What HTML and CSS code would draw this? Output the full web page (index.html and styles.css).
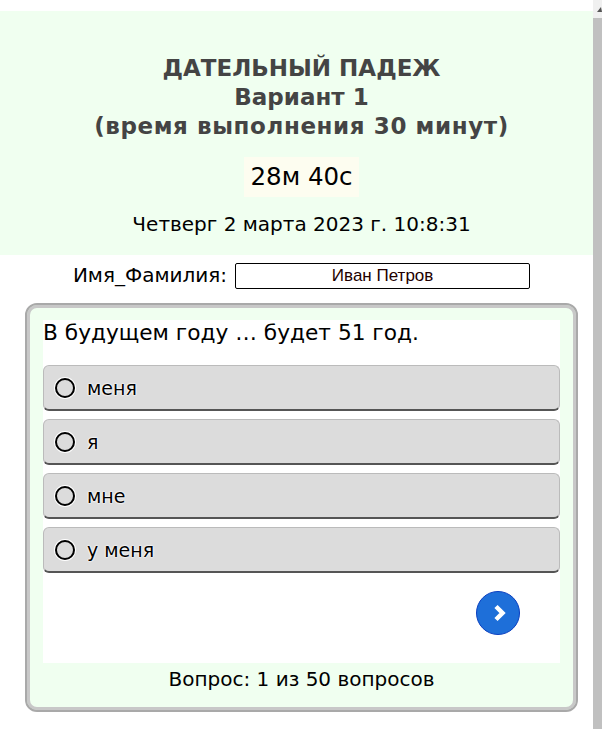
FILE: index.html
```html
<!DOCTYPE html>
<html>
<head>
    <meta charset="utf-8">
    <link rel="stylesheet" href="styles.css">
</head>
<body>
    <div class="page">
        <header class="head">
            <h1 class="title">ДАТЕЛЬНЫЙ ПАДЕЖ<br>Вариант 1<br><span class="title-note">(время выполнения 30 минут)</span></h1>
            <div class="timer">28м 40с</div>
            <p class="date">Четверг 2 марта 2023 г. 10:8:31</p>
        </header>
        <div class="name-row">
            <label class="name-label" for="name">Имя_Фамилия:</label>
            <input class="name-input" id="name" type="text" value="Иван Петров">
        </div>
        <section class="quiz">
            <div class="question-box">
                <p class="question">В будущем году … будет 51 год.</p>
                <div class="answer"><span class="radio"></span><span class="answer-text">меня</span></div>
                <div class="answer"><span class="radio"></span><span class="answer-text">я</span></div>
                <div class="answer"><span class="radio"></span><span class="answer-text">мне</span></div>
                <div class="answer"><span class="radio"></span><span class="answer-text">у меня</span></div>
                <div class="actions">
                    <button class="next" type="button">
                        <svg width="20" height="20" viewBox="0 0 20 20"><path d="M8 3.5 L14.5 10 L8 16.5" fill="none" stroke="#fff" stroke-width="4.5"/></svg>
                    </button>
                </div>
            </div>
            <p class="counter">Вопрос: 1 из 50 вопросов</p>
        </section>
    </div>
    <div class="scrollbar">
        <div class="arrow-btn"><span class="arrow-up"></span></div>
        <div class="track"></div>
    </div>
</body>
</html>
```

FILE: styles.css
```css
html, body {
    margin: 0;
    padding: 0;
    height: 100%;
    overflow: hidden;
}

body {
    display: flex;
    background-color: #fff;
    font-family: "DejaVu Sans", sans-serif;
    color: #000;
}

.page {
    flex: 1;
    padding-top: 11px;
}

.head {
    background-color: #f0fff0;
    height: 244px;
    padding: 43px 0 0 10px;
    box-sizing: border-box;
    text-align: center;
}

.title {
    margin: 0;
    font-size: 23px;
    line-height: 29px;
    font-weight: bold;
    color: #444;
    padding-bottom: 16px;
}

.title-note {
    letter-spacing: 0.6px;
}

.timer {
    display: inline-block;
    background-color: #fdfdf0;
    font-size: 24.5px;
    line-height: 40px;
    padding: 0 6px;
}

.date {
    margin: 15px 0 0;
    font-size: 20px;
    line-height: 24px;
}

.name-row {
    display: flex;
    justify-content: center;
    align-items: center;
    gap: 8px;
    height: 40px;
    padding: 0 0 0 10px;
}

.name-label {
    font-size: 20px;
}

.name-input {
    width: 295px;
    height: 26px;
    margin-top: 1px;
    box-sizing: border-box;
    border: 1px solid #000;
    border-radius: 2px;
    padding: 0;
    text-align: center;
    font-family: "Liberation Sans", sans-serif;
    font-size: 17px;
    color: #200;
}

.quiz {
    margin: 8px 0 0 25px;
    width: 553px;
    height: 409px;
    box-sizing: border-box;
    border: 2px solid #a9a9a9;
    border-radius: 12px;
    box-shadow: inset 0 0 0 3px #c8c8c8;
    background-color: #f0fff0;
    padding: 15px 16px 0;
}

.question-box {
    background-color: #fff;
    height: 343px;
    box-sizing: border-box;
}

.question {
    margin: 0;
    font-size: 21.7px;
    line-height: 26px;
    padding-bottom: 19px;
}

.answer {
    display: flex;
    align-items: center;
    height: 46px;
    box-sizing: border-box;
    margin-bottom: 8px;
    background-color: #dcdcdc;
    border: 1px solid #bbb;
    border-bottom: 2px solid #555;
    border-radius: 6px;
    padding-left: 11px;
}

.radio {
    width: 16px;
    height: 16px;
    border: 2px solid #000;
    border-radius: 50%;
    box-shadow: 0 0 0 1px #fff;
    margin-right: 12px;
}

.answer-text {
    font-size: 19px;
    line-height: 22px;
    text-shadow: 0 0 2px #fff, 0 0 2px #fff, 0 0 2px #fff;
}

.actions {
    display: flex;
    justify-content: flex-end;
    padding: 10px 40px 0 0;
}

.next {
    display: flex;
    align-items: center;
    justify-content: center;
    width: 44px;
    height: 44px;
    padding: 0;
    background-color: #1e6fd9;
    border: 1px solid #0a3fc0;
    border-radius: 50%;
}

.counter {
    margin: 4px 0 0;
    text-align: center;
    font-size: 20px;
    line-height: 24px;
}

.scrollbar {
    width: 9px;
    flex-shrink: 0;
    display: flex;
    flex-direction: column;
    overflow: hidden;
}

.arrow-btn {
    height: 18px;
    background-color: #f0f0f0;
    display: flex;
    justify-content: flex-end;
    align-items: center;
}

.arrow-up {
    width: 0;
    height: 0;
    border-left: 4px solid transparent;
    border-right: 1px solid transparent;
    border-bottom: 5px solid #555;
}

.track {
    flex: 1;
    background-color: #c0c0c0;
}
```
